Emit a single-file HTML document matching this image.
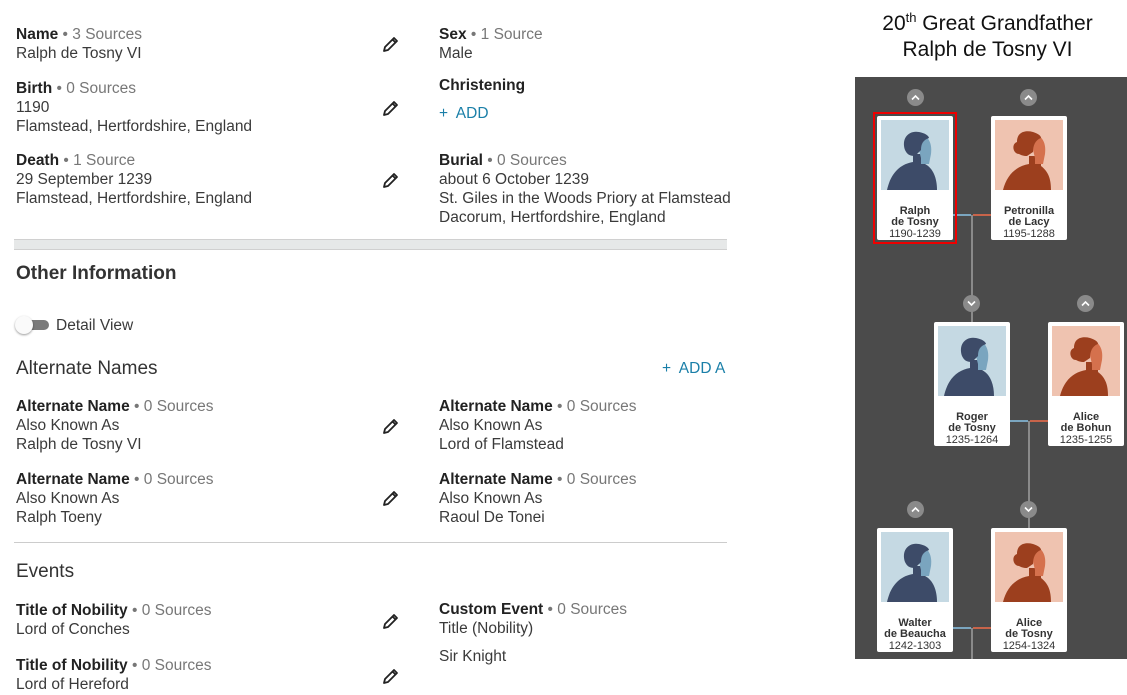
<!DOCTYPE html>
<html><head><style>
body{margin:0;width:1127px;height:695px;background:#fff;font-family:"Liberation Sans",sans-serif;color:#333;position:relative;overflow:hidden}
.t{position:absolute;font-size:15.5px;line-height:19px;color:#3a3a3a;white-space:nowrap}
.t b{color:#222}
.g{color:#777}
.pen{position:absolute;width:20px;height:20px}
.h{position:absolute;font-size:19px;color:#333}
.tree{position:absolute;left:855px;top:77px;width:272px;height:582px;background:#4b4b4b}
.card{position:absolute;width:76px;height:124px;background:#fff;border-radius:2px;text-align:center;font-size:11px;line-height:11px;color:#333}
.card .img{position:absolute;left:4px;top:4px;width:68px;height:70px;overflow:hidden}
.card .nm{position:absolute;left:0;right:0;top:90px;font-weight:bold}
.card .yr{display:block;font-weight:normal;margin-top:1px}
.btn{position:absolute;width:17px;height:17px;border-radius:50%;background:#8a8a8a}
.btn svg{position:absolute;left:4px;top:5px;width:9px;height:7px}
.ln{position:absolute;background:#8a8a8a}
</style></head><body>
<svg width="0" height="0" style="position:absolute"><defs>
<symbol id="p" viewBox="0 0 20 20"><path d="M3 17l1-4L13 4l3 3-9 9z M11.5 5.5l3 3" fill="none" stroke="#222" stroke-width="1.8" stroke-linejoin="round"/></symbol>
<symbol id="up" viewBox="0 0 9 7"><path d="M1 5.5L4.5 2 8 5.5" fill="none" stroke="#fff" stroke-width="1.6"/></symbol>
<symbol id="dn" viewBox="0 0 9 7"><path d="M1 1.5L4.5 5 8 1.5" fill="none" stroke="#fff" stroke-width="1.6"/></symbol>
<symbol id="m" viewBox="0 0 68 70"><rect width="68" height="70" fill="#c5d9e3"/><path d="M6 70c4-18 14-26 26-28v-8h12v10c8 4 12 14 12 26z" fill="#3d4b68"/><path d="M34 14c10-2 18 6 16 20l-2 10h-8v-6z" fill="#7aa5bf"/><path d="M24 30c-4-12 4-20 14-18 6 1 10 4 10 6-6 2-8 6-8 12l-6 6c-6 0-8-2-10-6z" fill="#3d4b68"/></symbol>
<symbol id="f" viewBox="0 0 68 70"><rect width="68" height="70" fill="#efc3b0"/><path d="M8 70c4-16 14-24 26-26v-8h12v10c8 6 10 14 10 24z" fill="#9c3f1e"/><path d="M34 14c10-2 18 6 16 20l-2 10h-8v-6z" fill="#d5714d"/><path d="M24 34c-6 0-8-10-2-12 0-10 8-12 16-10 6 2 8 4 8 6-6 2-8 8-8 14l-6 4c-4 0-6-1-8-2z" fill="#9c3f1e"/></symbol>
</defs></svg>

<div class="t" style="left:16px;top:25px"><b>Name</b> <span class="g">• 3 Sources</span><br>Ralph de Tosny VI</div>
<div class="t" style="left:439px;top:25px"><b>Sex</b> <span class="g">• 1 Source</span><br>Male</div>
<div class="t" style="left:16px;top:79px"><b>Birth</b> <span class="g">• 0 Sources</span><br>1190<br>Flamstead, Hertfordshire, England</div>
<div class="t" style="left:439px;top:76px"><b>Christening</b></div>
<div class="t" style="left:439px;top:104px;color:#1a7fa8">+&nbsp; ADD</div>
<div class="t" style="left:16px;top:151px"><b>Death</b> <span class="g">• 1 Source</span><br>29 September 1239<br>Flamstead, Hertfordshire, England</div>
<div class="t" style="left:439px;top:151px"><b>Burial</b> <span class="g">• 0 Sources</span><br>about 6 October 1239<br>St. Giles in the Woods Priory at Flamstead<br>Dacorum, Hertfordshire, England</div>
<svg class="pen" style="left:381px;top:34px"><use href="#p"/></svg>
<svg class="pen" style="left:381px;top:98px"><use href="#p"/></svg>
<svg class="pen" style="left:381px;top:170px"><use href="#p"/></svg>
<div style="position:absolute;left:14px;top:239px;width:713px;height:9px;background:#e6e8e8;border-top:1px solid #d0d0d0;border-bottom:1px solid #d0d0d0"></div>
<div class="h" style="left:16px;top:263px;font-weight:bold">Other Information</div>
<div style="position:absolute;left:20px;top:320px;width:29px;height:10px;border-radius:5px;background:#7a7a7a"></div>
<div style="position:absolute;left:15px;top:316px;width:18px;height:18px;border-radius:50%;background:#fafafa;box-shadow:0 1px 2px rgba(0,0,0,.4)"></div>
<div class="t" style="left:56px;top:316px">Detail View</div>
<div class="h" style="left:16px;top:358px">Alternate Names</div>
<div class="t" style="left:662px;top:359px;color:#1a7fa8">+&nbsp; ADD A</div>
<div style="position:absolute;left:727px;top:340px;width:10px;height:40px;background:#fff"></div>
<div class="t" style="left:16px;top:397px"><b>Alternate Name</b> <span class="g">• 0 Sources</span><br>Also Known As<br>Ralph de Tosny VI</div>
<div class="t" style="left:439px;top:397px"><b>Alternate Name</b> <span class="g">• 0 Sources</span><br>Also Known As<br>Lord of Flamstead</div>
<div class="t" style="left:16px;top:470px"><b>Alternate Name</b> <span class="g">• 0 Sources</span><br>Also Known As<br>Ralph Toeny</div>
<div class="t" style="left:439px;top:470px"><b>Alternate Name</b> <span class="g">• 0 Sources</span><br>Also Known As<br>Raoul De Tonei</div>
<svg class="pen" style="left:381px;top:416px"><use href="#p"/></svg>
<svg class="pen" style="left:381px;top:488px"><use href="#p"/></svg>
<div style="position:absolute;left:14px;top:542px;width:713px;height:1px;background:#ccc"></div>
<div class="h" style="left:16px;top:561px">Events</div>
<div class="t" style="left:16px;top:601px"><b>Title of Nobility</b> <span class="g">• 0 Sources</span><br>Lord of Conches</div>
<div class="t" style="left:439px;top:600px"><b>Custom Event</b> <span class="g">• 0 Sources</span><br>Title (Nobility)</div>
<div class="t" style="left:439px;top:647px">Sir Knight</div>
<div class="t" style="left:16px;top:656px"><b>Title of Nobility</b> <span class="g">• 0 Sources</span><br>Lord of Hereford</div>
<svg class="pen" style="left:381px;top:611px"><use href="#p"/></svg>
<svg class="pen" style="left:381px;top:666px"><use href="#p"/></svg>

<div style="position:absolute;left:855px;top:5px;width:265px;text-align:center;font-size:21px;line-height:26px;color:#111">20<sup style="font-size:13px">th</sup> Great Grandfather<br>Ralph de Tosny VI</div>

<div class="tree">
<div class="ln" style="left:116px;top:138px;width:2px;height:107px"></div>
<div class="ln" style="left:98px;top:137px;width:18px;height:2px;background:#7aa5bf"></div>
<div class="ln" style="left:118px;top:137px;width:18px;height:2px;background:#c8644a"></div>
<div class="ln" style="left:173px;top:344px;width:2px;height:107px"></div>
<div class="ln" style="left:155px;top:343px;width:18px;height:2px;background:#7aa5bf"></div>
<div class="ln" style="left:175px;top:343px;width:18px;height:2px;background:#c8644a"></div>
<div class="ln" style="left:116px;top:551px;width:2px;height:31px"></div>
<div class="ln" style="left:98px;top:550px;width:18px;height:2px;background:#7aa5bf"></div>
<div class="ln" style="left:118px;top:550px;width:18px;height:2px;background:#c8644a"></div>
<div style="position:absolute;left:18px;top:35px;width:84px;height:132px;border:2px solid #e00;box-sizing:border-box"></div>
<div class="card" style="left:22px;top:39px"><svg class="img"><use href="#m"/></svg><div class="nm">Ralph<br>de Tosny<span class="yr">1190-1239</span></div></div>
<div class="card" style="left:136px;top:39px"><svg class="img"><use href="#f"/></svg><div class="nm">Petronilla<br>de Lacy<span class="yr">1195-1288</span></div></div>
<div class="card" style="left:79px;top:245px"><svg class="img"><use href="#m"/></svg><div class="nm">Roger<br>de Tosny<span class="yr">1235-1264</span></div></div>
<div class="card" style="left:193px;top:245px"><svg class="img"><use href="#f"/></svg><div class="nm">Alice<br>de Bohun<span class="yr">1235-1255</span></div></div>
<div class="card" style="left:22px;top:451px"><svg class="img"><use href="#m"/></svg><div class="nm">Walter<br>de Beaucha<span class="yr">1242-1303</span></div></div>
<div class="card" style="left:136px;top:451px"><svg class="img"><use href="#f"/></svg><div class="nm">Alice<br>de Tosny<span class="yr">1254-1324</span></div></div>
<div class="btn" style="left:52px;top:12px"><svg><use href="#up"/></svg></div>
<div class="btn" style="left:165px;top:12px"><svg><use href="#up"/></svg></div>
<div class="btn" style="left:108px;top:218px"><svg><use href="#dn"/></svg></div>
<div class="btn" style="left:222px;top:218px"><svg><use href="#up"/></svg></div>
<div class="btn" style="left:52px;top:424px"><svg><use href="#up"/></svg></div>
<div class="btn" style="left:165px;top:424px"><svg><use href="#dn"/></svg></div>
</div>
</body></html>
